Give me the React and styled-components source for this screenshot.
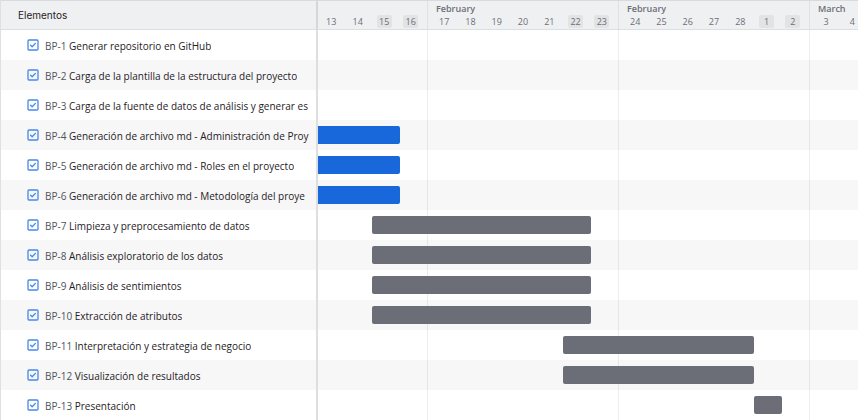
import React from "react";
import styled, { createGlobalStyle } from "styled-components";

const GlobalStyle = createGlobalStyle`
  *, *::before, *::after { box-sizing: border-box; }
  :root { --week: 191px; --lead: 109px; }
  body {
    margin: 0;
    background: #fff;
    color: #1f2126;
    font-family: "Open Sans", "Noto Sans", sans-serif;
    font-size: 10px;
    line-height: 16px;
  }
`;

const Roadmap = styled.main`
  border-left: 1px solid #dfe0e2;
  overflow: hidden;
`;

const Columns = styled.div`
  display: grid;
  grid-template-columns: 317px minmax(0, 1fr);
`;

const Header = styled(Columns)`
  height: 30px;
  background: #eff0f2;
  border-top: 1px solid #d9dadd;
  border-bottom: 1px solid #dcdfe0;
`;

const Title = styled.h1`
  display: flex;
  align-items: center;
  margin: 0;
  padding: 0 0 1px 17px;
  border-right: 2px solid #d6d7d9;
  font: 400 10px/16px Inter, "Liberation Sans", sans-serif;
`;

const Weeks = styled.div`
  display: flex;
  overflow: hidden;
  color: #6b6e76;
`;

const Week = styled.section`
  flex: none;
  display: flex;
  flex-direction: column;
  justify-content: flex-end;
  width: ${(p) => (p.$lead ? "var(--lead)" : "var(--week)")};
  padding: 0 3px 1px ${(p) => (p.$lead ? 0 : 3)}px;
  border-left: ${(p) => (p.$lead ? 0 : 1)}px solid #e0e1e3;
`;

const Month = styled.h2`
  margin: 0;
  padding-left: 5px;
  font-size: 9px;
  font-weight: 600;
  line-height: 12px;
`;

const Days = styled.div`
  display: grid;
  grid-template-columns: repeat(${(p) => (p.$lead ? 4 : 7)}, minmax(0, 1fr));
  justify-items: center;
`;

const Day = styled.span`
  width: 15px;
  border-radius: 2px;
  background: ${(p) => (p.$off ? "#e2e3e5" : "transparent")};
  font-size: 9px;
  line-height: 13px;
  text-align: center;
`;

const List = styled.div`
  display: flex;
  flex-direction: column;
`;

const Row = styled(Columns)`
  height: 30px;
  &:nth-child(even) { background: #f7f7f7; }
`;

const Item = styled.label`
  display: flex;
  align-items: center;
  gap: 6px;
  padding: 0 6px 0 26px;
  border-right: 2px solid #dddedf;
`;

const CheckSlot = styled.span`
  flex: none;
  display: grid;
  width: 12px;
  height: 12px;
  > * { grid-area: 1 / 1; }
`;

const CheckInput = styled.input`
  appearance: none;
  width: 12px;
  height: 12px;
  margin: 0;
  cursor: pointer;
  &:focus-visible { outline: 2px solid #1868db; }
  &:not(:checked) + svg polyline { display: none; }
`;

const CheckIcon = styled.svg`
  width: 12px;
  height: 12px;
  fill: none;
  stroke: #4688ec;
  stroke-linecap: round;
  stroke-linejoin: round;
  pointer-events: none;
`;

const Name = styled.span`
  padding-top: 1px;
  overflow: hidden;
  white-space: nowrap;
`;

const Key = styled.span`
  color: #50535b;
`;

const Track = styled.div`
  display: flex;
  align-items: center;
  overflow: hidden;
  background: linear-gradient(to right, rgba(0, 0, 0, 0.07) 1px, transparent 1px)
    var(--lead) 0 / var(--week) 100%;
`;

const Bar = styled.div`
  flex: none;
  height: 18px;
  margin-left: calc(var(--lead) + var(--week) * ${(p) => p.$from} / 7);
  width: calc(var(--week) * ${(p) => p.$days} / 7);
  border-radius: 2px;
  background: ${(p) => (p.$done ? "#1868db" : "#6b6e76")};
`;

const weeks = [
  { days: [13, 14, 15, 16], lead: true },
  { month: "February", days: [17, 18, 19, 20, 21, 22, 23] },
  { month: "February", days: [24, 25, 26, 27, 28, 1, 2] },
  { month: "March", days: [3, 4] },
];

// "from" counts days relative to Monday, February 17.
const items = [
  { name: "Generar repositorio en GitHub" },
  { name: "Carga de la plantilla de la estructura del proyecto" },
  { name: "Carga de la fuente de datos de análisis y generar es" },
  { name: "Generación de archivo md - Administración de Proy", from: -6, days: 5, done: true },
  { name: "Generación de archivo md - Roles en el proyecto", from: -6, days: 5, done: true },
  { name: "Generación de archivo md - Metodología del proye", from: -6, days: 5, done: true },
  { name: "Limpieza y preprocesamiento de datos", from: -2, days: 8 },
  { name: "Análisis exploratorio de los datos", from: -2, days: 8 },
  { name: "Análisis de sentimientos", from: -2, days: 8 },
  { name: "Extracción de atributos", from: -2, days: 8 },
  { name: "Interpretación y estrategia de negocio", from: 5, days: 7 },
  { name: "Visualización de resultados", from: 5, days: 7 },
  { name: "Presentación", from: 12, days: 1 },
];

function Check() {
  return (
    <CheckSlot>
      <CheckInput type="checkbox" defaultChecked />
      <CheckIcon viewBox="0 0 12 12" aria-hidden="true">
        <rect x="1" y="1" width="10" height="10" rx="1" strokeWidth="1.3" />
        <polyline points="3.6,6.2 5.2,7.8 8.4,4.4" strokeWidth="1.3" />
      </CheckIcon>
    </CheckSlot>
  );
}

export default function App() {
  return (
    <>
      <GlobalStyle />
      <Roadmap>
        <Header>
          <Title>Elementos</Title>
          <Weeks>
            {weeks.map((week, i) => (
              <Week key={i} $lead={week.lead}>
                {week.month && <Month>{week.month}</Month>}
                <Days $lead={week.lead}>
                  {week.days.map((day) => (
                    <Day key={day} $off={[15, 16, 22, 23, 1, 2].includes(day)}>{day}</Day>
                  ))}
                </Days>
              </Week>
            ))}
          </Weeks>
        </Header>
        <List>
          {items.map((item, i) => (
            <Row key={item.name}>
              <Item>
                <Check />
                <Name><Key>BP-{i + 1}</Key> {item.name}</Name>
              </Item>
              <Track>
                {item.days && <Bar $from={item.from} $days={item.days} $done={item.done} />}
              </Track>
            </Row>
          ))}
        </List>
      </Roadmap>
    </>
  );
}
